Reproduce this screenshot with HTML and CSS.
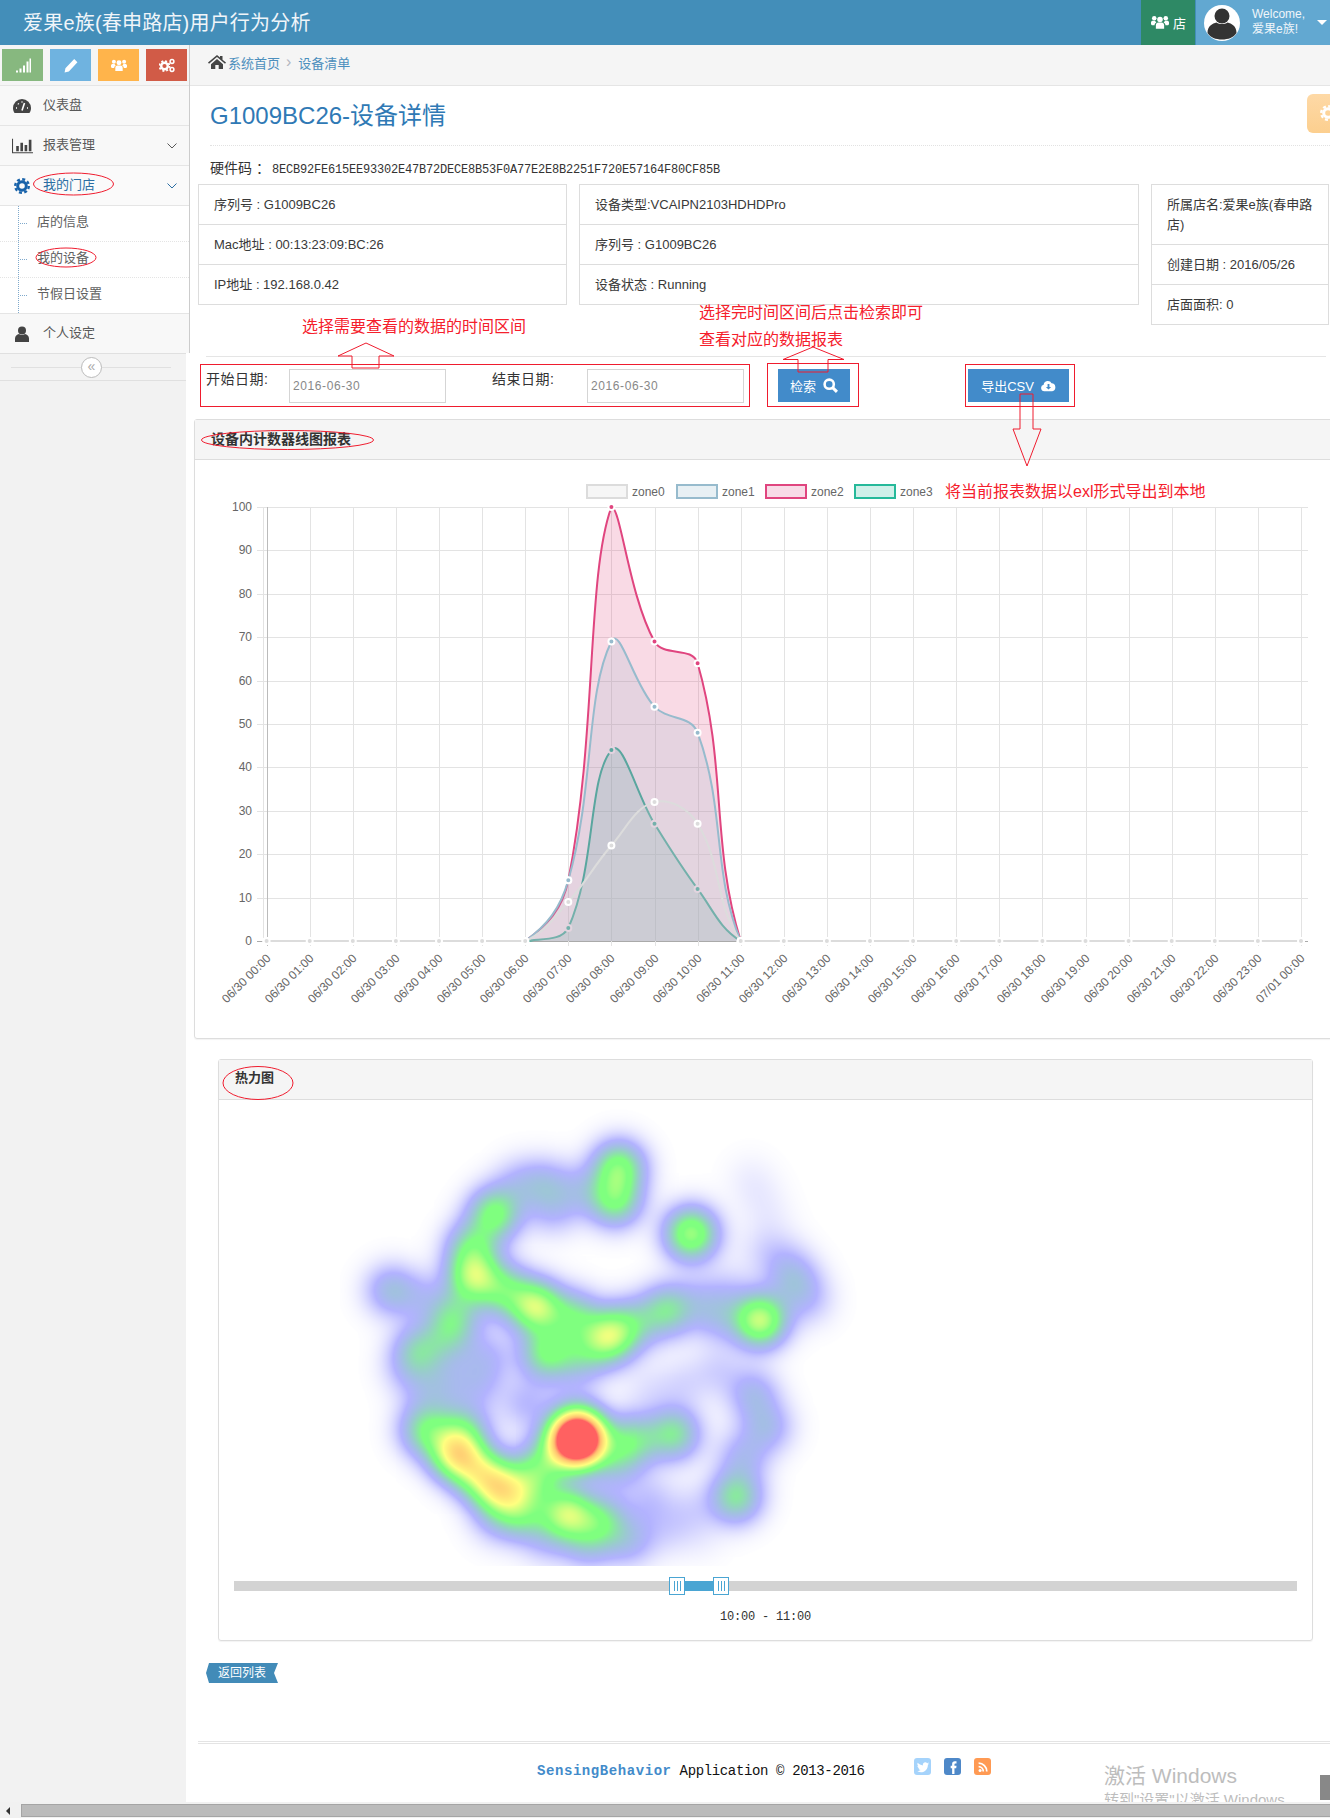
FILE: index.html
```html
<!DOCTYPE html>
<html lang="zh-CN">
<head>
    <meta charset="UTF-8">
    <title>爱果e族(春申路店)用户行为分析</title>
    <link rel="stylesheet" href="styles.css">
</head>
<body>
    <!-- Top bar -->
    <header class="navbar">
        <div class="brand">爱果e族(春申路店)用户行为分析</div>
        <div class="store-tile">
            <svg class="ico-users" viewBox="0 0 20 16"><circle cx="10" cy="4.6" r="3.1"/><circle cx="3.6" cy="3.4" r="2.5"/><circle cx="16.4" cy="3.4" r="2.5"/><path d="M5.4 15V11c0-2 1.5-3 2.4-3h4.4c.9 0 2.4 1 2.4 3v4zM0 10V8c0-1.4 1-2 2-2h2.5c.3 1 1 1.6 1.5 2-1.200.5-2 1.600-2 3H1zM20 10V8c0-1.400-1-2-2-2h-2.500c-.3 1-1 1.600-1.500 2 1.200.5 2 1.600 2 3h3z"/></svg>
            <span>店</span>
        </div>
        <div class="user-tile">
            <svg class="avatar" viewBox="0 0 36 36"><circle cx="18" cy="18" r="18" fill="#fff"/><circle cx="18" cy="11" r="7.500" fill="#333"/><path d="M3.500 28c0-7 5-9.500 9-10.500 3 2 8 2 11 0 4 1 9 3.500 9 10.500-3 4.500-8 6.500-14.500 6.500S6.500 32.500 3.500 28z" fill="#333"/></svg>
            <div class="welcome">Welcome,<br>爱果e族!</div>
            <i class="caret"></i>
        </div>
    </header>

    <div class="layout">
        <!-- Side menu -->
        <aside class="sidebar">
            <div class="sidebar-top">
                <div class="shortcuts">
                    <a class="short green"><svg viewBox="0 0 16 14"><path d="M1 12h2v2H1zM4.500 10h2v4h-2zM8 7h2v7H8zM11.500 3h2v11h-2zM14.500 0H16v14h-1.500z"/></svg></a>
                    <a class="short blue"><svg viewBox="0 0 14 14"><path d="M10 1l3 3-8 8.500L1 13.500 1.800 9.500zM2.500 10l1.500 1.500"/></svg></a>
                    <a class="short orange"><svg viewBox="0 0 20 16"><circle cx="10" cy="4.600" r="3.100"/><circle cx="3.600" cy="3.400" r="2.500"/><circle cx="16.400" cy="3.400" r="2.500"/><path d="M5.400 15V11c0-2 1.500-3 2.400-3h4.400c.9 0 2.400 1 2.400 3v4zM0 10V8c0-1.400 1-2 2-2h2.500c.3 1 1 1.600 1.500 2-1.200.5-2 1.600-2 3H1zM20 10V8c0-1.400-1-2-2-2h-2.500c-.3 1-1 1.600-1.500 2 1.200.5 2 1.600 2 3h3z"/></svg></a>
                    <a class="short red"><svg viewBox="0 0 16 14"><circle cx="5.500" cy="7.500" r="3.300" fill="none" stroke="#fff" stroke-width="2.400"/><circle cx="5.500" cy="7.500" r="5" fill="none" stroke="#fff" stroke-width="1.800" stroke-dasharray="2 1.930"/><circle cx="13" cy="3" r="1.900" fill="none" stroke="#fff" stroke-width="1.500"/><circle cx="13" cy="11" r="1.900" fill="none" stroke="#fff" stroke-width="1.500"/></svg></a>
                </div>
                <nav class="menu">
                    <a class="menu-item">
                        <svg class="menu-ico" viewBox="0 0 18 14"><path fill="#444" d="M9 0a9 9 0 0 1 9 9c0 2-.6 3.700-1.600 5H1.600C.6 12.700 0 11 0 9a9 9 0 0 1 9-9z"/><path stroke="#fff" stroke-width="1.600" d="M9 11.500L11.500 4M3 9h1M14 9h1M5 4.500l.7.7M9 2.500v1"/></svg>
                        <span>仪表盘</span>
                    </a>
                    <a class="menu-item">
                        <svg class="menu-ico wide" viewBox="0 0 20 14"><path fill="none" stroke="#444" d="M.5 0v13.500H20"/><path fill="#444" d="M4 7h2.500v5H4zM8 4h2.500v8H8zM12 6h2.500v6H12zM16 1h2.500v11H16z"/></svg>
                        <span>报表管理</span>
                        <svg class="chev" viewBox="0 0 10 6"><path d="M.5.500L5 5 9.500.5"/></svg>
                    </a>
                    <a class="menu-item active">
                        <svg class="menu-ico" viewBox="0 0 16 16"><circle cx="8" cy="8" r="4.300" fill="none" stroke="#1963aa" stroke-width="3"/><circle cx="8" cy="8" r="6.800" fill="none" stroke="#1963aa" stroke-width="2.400" stroke-dasharray="3 2.340"/></svg>
                        <span>我的门店</span>
                        <svg class="chev" viewBox="0 0 10 6"><path d="M.5.500L5 5 9.500.5"/></svg>
                    </a>
                    <div class="submenu">
                        <a class="sub-item">店的信息</a>
                        <a class="sub-item">我的设备</a>
                        <a class="sub-item">节假日设置</a>
                    </div>
                    <a class="menu-item last">
                        <svg class="menu-ico" viewBox="0 0 16 16"><circle cx="8" cy="4.500" r="4" fill="#444"/><path fill="#444" d="M1 16v-3.500C1 10 3 8.500 5 8c1.800 1.300 4.200 1.300 6 0 2 .5 4 2 4 4.500V16z"/></svg>
                        <span>个人设定</span>
                    </a>
                </nav>
            </div>
            <div class="collapse"><span class="collapse-btn">«</span></div>
            <div class="sidebar-rest"></div>
        </aside>

        <main class="main">
            <div class="breadcrumbs">
                <svg class="ico-home" viewBox="0 0 18 14"><path d="M9 0l3 2.600V1h2.500v3.700L18 7.600l-1 1.100L9 2 1 8.700 0 7.600zM3 9.200L9 4l6 5.200V14h-4.300v-4H7.300v4H3z"/></svg>
                <a>系统首页</a><span class="sep">›</span><a>设备清单</a>
            </div>

            <div class="page-header">
                <h1>G1009BC26-设备详情</h1>
            </div>

            <p class="hardware">硬件码 ：<code>8ECB92FE615EE93302E47B72DECE8B53F0A77E2E8B2251F720E57164F80CF85B</code></p>

            <!-- Device info -->
            <div class="info-row">
                <table class="info-table t1">
                    <tr><td>序列号 : G1009BC26</td></tr>
                    <tr><td>Mac地址 : 00:13:23:09:BC:26</td></tr>
                    <tr><td>IP地址 : 192.168.0.42</td></tr>
                </table>
                <table class="info-table t2">
                    <tr><td>设备类型:VCAIPN2103HDHDPro</td></tr>
                    <tr><td>序列号 : G1009BC26</td></tr>
                    <tr><td>设备状态 : Running</td></tr>
                </table>
                <table class="info-table t3">
                    <tr><td>所属店名:爱果e族(春申路店)</td></tr>
                    <tr><td>创建日期 : 2016/05/26</td></tr>
                    <tr><td>店面面积: 0</td></tr>
                </table>
            </div>

            <hr class="rule">

            <form class="search-row">
                <label>开始日期:</label>
                <input class="date" type="text" value="2016-06-30">
                <label class="second">结束日期:</label>
                <input class="date" type="text" value="2016-06-30">
                <button type="button" class="btn btn-search">检索
                    <svg viewBox="0 0 14 14"><circle cx="5.800" cy="5.800" r="4.300" fill="none" stroke="#fff" stroke-width="2.400"/><path d="M9 9l4 4" stroke="#fff" stroke-width="2.800"/></svg>
                </button>
                <button type="button" class="btn btn-export">导出CSV
                    <svg viewBox="0 0 16 12"><path fill="#fff" d="M3.500 12A3.500 3.500 0 0 1 2.800 5.100 4.500 4.500 0 0 1 11.300 3.700 4.200 4.200 0 0 1 12 12z"/><path fill="#428bca" d="M7 4.500h2v3h1.800L8 10.300 5.200 7.500H7z"/></svg>
                </button>
            </form>

            <!-- Line chart -->
            <section class="panel chart-panel">
                <div class="panel-head">设备内计数器线图报表</div>
                <svg id="chart" class="chart" width="1135" height="578"></svg>
            </section>

            <!-- Heat map -->
            <section class="panel heat-panel">
                <div class="panel-head small">热力图</div>
                <canvas id="heat" class="heat" width="540" height="466"></canvas>
                <div class="slider">
                    <div class="slider-range"></div>
                    <span class="handle h-left"></span>
                    <span class="handle h-right"></span>
                </div>
                <div class="slider-label">10:00 - 11:00</div>
            </section>

            <a class="back-btn">返回列表</a>

            <footer class="footer">
                <p><b>SensingBehavior</b> Application © 2013-2016</p>
                <div class="social">
                    <a class="tw"><svg viewBox="0 0 24 24"><path d="M22.460 6c-.77.350-1.600.580-2.460.690.880-.530 1.560-1.370 1.880-2.380-.830.500-1.750.850-2.720 1.050C18.370 4.500 17.260 4 16 4c-2.350 0-4.270 1.920-4.270 4.290 0 .340.040.670.110.980C8.280 9.090 5.110 7.380 3 4.790c-.370.630-.580 1.370-.580 2.150 0 1.490.750 2.810 1.910 3.560-.710 0-1.370-.200-1.950-.500v.030c0 2.080 1.480 3.820 3.440 4.210a4.220 4.220 0 0 1-1.930.070 4.280 4.280 0 0 0 4 2.980 8.520 8.520 0 0 1-5.330 1.840c-.340 0-.680-.020-1.020-.060C3.440 20.290 5.700 21 8.120 21 16 21 20.330 14.460 20.330 8.790c0-.190 0-.370-.010-.560.840-.600 1.560-1.360 2.140-2.230z"/></svg></a>
                    <a class="fb"><svg viewBox="0 0 24 24"><path d="M18 2v4h-2c-1 0-1.500.5-1.500 1.500V10H18l-.5 4h-3v10h-4V14H8v-4h2.500V6.500C10.500 3.800 12.300 2 15 2z"/></svg></a>
                    <a class="rss"><svg viewBox="0 0 24 24"><circle cx="7" cy="18" r="2.600"/><path d="M4.500 10a9.500 9.500 0 0 1 9.500 9.500h-3A6.500 6.500 0 0 0 4.500 13zM4.500 4A15.500 15.500 0 0 1 20 19.500h-3A12.500 12.500 0 0 0 4.500 7z"/></svg></a>
                </div>
            </footer>
        </main>
    </div>

    <!-- Gear tab and activation notice sit over the page -->
    <div class="settings-tab">
        <svg viewBox="0 0 16 16"><circle cx="8" cy="8" r="4.300" fill="none" stroke="#fff" stroke-width="3"/><circle cx="8" cy="8" r="6.800" fill="none" stroke="#fff" stroke-width="2.400" stroke-dasharray="3 2.340"/></svg>
    </div>
    <div class="activate">
        <div class="activate-big">激活 Windows</div>
        <div class="activate-small">转到"设置"以激活 Windows。</div>
    </div>
    <span class="page-grip"></span>

    <div class="scrollbar"><span class="scroll-left"></span><span class="scroll-thumb"></span></div>

    <!-- Red notes someone drew on the screenshot -->
    <div class="note n1">选择需要查看的数据的时间区间</div>
    <div class="note n2">选择完时间区间后点击检索即可<br>查看对应的数据报表</div>
    <div class="note n3">将当前报表数据以exl形式导出到本地</div>
    <svg class="marks" width="1330" height="1818">
        <ellipse cx="73.500" cy="184" rx="40" ry="11"/>
        <ellipse cx="66" cy="257.500" rx="30" ry="9.500"/>
        <ellipse cx="287.500" cy="440" rx="86" ry="9.500"/>
        <ellipse cx="258" cy="1083" rx="35" ry="16.500"/>
        <rect x="200.500" y="364.500" width="549" height="42"/>
        <rect x="767.500" y="363.500" width="91" height="43"/>
        <rect x="965.500" y="364.500" width="109" height="42"/>
        <polygon points="366,343 394,356 379,356 379,368 352,368 352,356 338,356"/>
        <polygon points="813,347 844,359.500 828,359.500 828,372 798,372 798,359.500 783,359.500"/>
        <polygon points="1020,394 1033,394 1033,429 1041,429 1027,466 1013,429 1020,429"/>
    </svg>

    <script src="script.js"></script>
</body>
</html>
```

FILE: styles.css
```css
/* General Styles */
html, body {
    margin: 0;
    padding: 0;
    height: 100%;
    overflow: hidden;
}

body {
    position: relative;
    font-family: "Liberation Sans", "Noto Sans CJK SC", sans-serif;
    font-size: 13px;
    color: #393939;
    background-color: #fff;
}

/* Top bar */
.navbar {
    display: flex;
    align-items: stretch;
    height: 45px;
    background-color: #438eb9;
    color: #fff;
}

.brand {
    flex: 1;
    padding-left: 23px;
    font-size: 20px;
    letter-spacing: .2px;
    line-height: 47px;
    color: #f0f5f9;
}

.store-tile {
    display: flex;
    align-items: center;
    width: 54px;
    padding-left: 10px;
    box-sizing: border-box;
    background-color: #2e8965;
    font-size: 13px;
}

.ico-users {
    width: 18px;
    height: 15px;
    margin-right: 4px;
    fill: #fff;
}

.user-tile {
    display: flex;
    align-items: center;
    width: 134px;
    margin-left: 1px;
    padding-left: 8px;
    box-sizing: border-box;
    background-color: #62a8d1;
}

.avatar {
    width: 36px;
    height: 36px;
    margin-right: 12px;
}

.welcome {
    width: 65px;
    margin-top: -2px;
    font-size: 12px;
    line-height: 15px;
    color: #f0f6fa;
}

.caret {
    width: 0;
    height: 0;
    border-left: 5px solid transparent;
    border-right: 5px solid transparent;
    border-top: 5px solid #fff;
}

/* Layout */
.layout {
    display: flex;
    height: 1757px;
}

.sidebar {
    display: flex;
    flex-direction: column;
    flex: none;
    width: 190px;
}

.sidebar-top {
    height: 308px;
    box-sizing: border-box;
    border-right: 1px solid #ccc;
    background-color: #f8f8f8;
}

.shortcuts {
    display: flex;
    gap: 7px;
    height: 41px;
    padding: 4px 2px 0;
    box-sizing: border-box;
    background-color: #f5f5f5;
    border-bottom: 1px solid #e5e5e5;
}

.short {
    display: flex;
    align-items: center;
    justify-content: center;
    width: 41px;
    height: 32px;
}

.short svg {
    width: 16px;
    height: 15px;
    fill: #fff;
}

.green { background-color: #87b87f; }
.blue { background-color: #6fb3e0; }
.orange { background-color: #ffb44b; }
.red { background-color: #d15b47; }

.menu-item {
    display: flex;
    align-items: center;
    position: relative;
    height: 40px;
    padding: 0 0 5px 43px;
    box-sizing: border-box;
    border-bottom: 1px solid #e5e5e5;
    font-size: 13px;
    color: #585858;
}

.menu-item.active {
    color: #2b6ea3;
    background-color: #fafafa;
}

.menu-ico {
    position: absolute;
    left: 13px;
    top: 12px;
    width: 18px;
    height: 16px;
}

.menu-ico.wide {
    left: 12px;
    width: 21px;
}

.chev {
    position: absolute;
    left: 167px;
    top: 17px;
    width: 10px;
    height: 6px;
    fill: none;
    stroke: #585858;
}

.active .chev {
    stroke: #2b6ea3;
}

.submenu {
    position: relative;
    background-color: #fff;
    border-bottom: 1px solid #e5e5e5;
}

.submenu::before {
    content: "";
    position: absolute;
    left: 18px;
    top: 0;
    bottom: 0;
    border-left: 1px dotted #7fa9cc;
}

.sub-item {
    display: flex;
    align-items: center;
    position: relative;
    height: 36px;
    padding: 0 0 6px 37px;
    box-sizing: border-box;
    border-bottom: 1px dotted #e4e4e4;
    font-size: 13px;
    color: #616161;
}

.sub-item:last-child {
    border-bottom: 0;
    height: 35px;
}

.sub-item::before {
    content: "";
    position: absolute;
    left: 20px;
    top: 17px;
    width: 7px;
    border-top: 1px dotted #7fa9cc;
}

.menu-item.last {
    border-bottom: 0;
}

.collapse {
    position: relative;
    width: 186px;
    height: 28px;
    box-sizing: border-box;
    background-color: #f3f3f3;
    border-top: 1px solid #e0e0e0;
    border-bottom: 1px solid #e0e0e0;
}

.collapse::before {
    content: "";
    position: absolute;
    left: 11px;
    right: 15px;
    top: 13px;
    border-top: 1px solid #e0e0e0;
}

.collapse-btn {
    position: absolute;
    left: 81px;
    top: 3px;
    width: 19px;
    height: 19px;
    border: 1px solid #bbb;
    border-radius: 50%;
    background-color: #fff;
    font-size: 14px;
    line-height: 16px;
    text-align: center;
    color: #aaa;
}

.sidebar-rest {
    flex: 1;
    width: 186px;
    background-color: #f2f2f2;
}

/* Main column */
.main {
    flex: 1;
    min-width: 0;
    overflow: hidden;
}

.breadcrumbs {
    display: flex;
    align-items: center;
    height: 41px;
    padding: 0 0 6px 18px;
    box-sizing: border-box;
    background-color: #f5f5f5;
    border-bottom: 1px solid #e5e5e5;
    font-size: 13px;
    color: #4c8fbd;
}

.ico-home {
    width: 18px;
    height: 14px;
    margin-right: 2px;
    fill: #444;
}

.sep {
    margin: 0 7px 0 6px;
    font-size: 16px;
    color: #b2b6bf;
}

.page-header {
    height: 60px;
    margin-left: 20px;
    box-sizing: border-box;
    border-bottom: 1px dotted #e2e2e2;
}

.page-header h1 {
    margin: 0;
    font-size: 24px;
    font-weight: normal;
    line-height: 60px;
    color: #2f79b5;
}

.hardware {
    height: 38px;
    margin: 0 0 0 20px;
    box-sizing: border-box;
    font-size: 14px;
    line-height: 44px;
    color: #333;
}

.hardware code {
    margin-left: 2px;
    font-family: "Liberation Mono", monospace;
    font-size: 12px;
    letter-spacing: -.2px;
}

.info-row {
    display: flex;
    align-items: flex-start;
    margin-left: 8px;
    height: 139px;
}

.info-table {
    border-collapse: collapse;
    table-layout: fixed;
    flex: none;
}

.info-table td {
    padding: 9.500px 15px;
    border: 1px solid #ddd;
    line-height: 20px;
}

.t1 { width: 369px; margin-right: 12px; }
.t2 { width: 560px; margin-right: 12px; }
.t3 { width: 178px; }

.rule {
    height: 0;
    margin: 33px 4px 0 16px;
    border: 0;
    border-top: 1px solid #e5e5e5;
}

.search-row {
    display: flex;
    align-items: flex-start;
    height: 50px;
    margin: 12px 0 0 16px;
    font-size: 14px;
}

.search-row label {
    width: 83px;
    letter-spacing: .5px;
    line-height: 20px;
    color: #333;
}

.search-row label.second {
    width: 95px;
    margin-left: 46px;
}

.date {
    width: 157px;
    height: 34px;
    padding: 0 3px;
    box-sizing: border-box;
    border: 1px solid #d5d5d5;
    font-family: "Liberation Sans", sans-serif;
    font-size: 12px;
    letter-spacing: .6px;
    color: #888;
}

.btn {
    display: flex;
    align-items: center;
    justify-content: center;
    height: 33px;
    padding: 0;
    border: 0;
    background-color: #428bca;
    font-family: inherit;
    font-size: 13px;
    color: #fff;
}

.btn svg {
    width: 15px;
    height: 15px;
    margin-left: 7px;
}

.btn-search {
    width: 72px;
    margin-left: 34px;
}

.btn-export {
    width: 101px;
    margin-left: 118px;
}

.panel {
    border: 1px solid #ddd;
    box-sizing: border-box;
    border-radius: 3px;
    box-shadow: 0 1px 1px rgba(0, 0, 0, .05);
}

.panel-head {
    height: 40px;
    padding-left: 16px;
    box-sizing: border-box;
    background-color: #f5f5f5;
    border-bottom: 1px solid #ddd;
    font-size: 14px;
    font-weight: bold;
    line-height: 39px;
    color: #333;
}

.panel-head.small {
    padding-left: 16px;
    font-size: 13px;
    line-height: 36px;
}

.chart-panel {
    width: 1200px;
    height: 620px;
    margin-left: 4px;
}

.chart {
    display: block;
}

.chart text {
    font-family: "Liberation Sans", sans-serif;
    font-size: 12px;
    fill: #666;
}

.heat-panel {
    width: 1095px;
    height: 582px;
    margin: 20px 0 0 28px;
}

.heat {
    display: block;
    margin-left: 121px;
}

.slider {
    position: relative;
    height: 10px;
    margin: 15px 15px 0 15px;
    background-color: #d3d3d3;
}

.slider-range {
    position: absolute;
    left: 443px;
    width: 48px;
    top: 0;
    bottom: 0;
    background-color: #4aa5d3;
}

.handle {
    position: absolute;
    top: -4px;
    width: 14px;
    height: 16px;
    border: 1px solid #4aa5d3;
    background-color: #fff;
}

/* three grip lines */
.handle::after {
    content: "";
    position: absolute;
    left: 4px;
    top: 3px;
    width: 7px;
    height: 10px;
    background: repeating-linear-gradient(90deg, #4aa5d3 0, #4aa5d3 1px, transparent 1px, transparent 3px);
}

.h-left { left: 435px; }
.h-right { left: 479px; }

.slider-label {
    margin-top: 19px;
    font-family: "Liberation Mono", monospace;
    font-size: 12px;
    letter-spacing: -.2px;
    line-height: 14px;
    text-align: center;
    color: #333;
}

.back-btn {
    display: block;
    width: 72px;
    height: 20px;
    margin: 22px 0 0 16px;
    background-color: #428bb8;
    clip-path: polygon(3px 0, 100% 0, calc(100% - 4px) 50%, 100% 100%, 3px 100%, 0 50%);
    font-size: 12px;
    line-height: 20px;
    text-align: center;
    color: #fff;
}

.footer {
    position: relative;
    height: 58px;
    margin: 58px 0 0 8px;
    border-top: 3px double #e4e4e4;
}

.footer p {
    position: absolute;
    left: 339px;
    top: 17px;
    margin: 0;
    font-family: "Liberation Mono", monospace;
    font-size: 14px;
    letter-spacing: -.36px;
    line-height: 20px;
    color: #111;
}

.footer b {
    letter-spacing: .57px;
    color: #428bca;
}

.social {
    position: absolute;
    left: 716px;
    top: 14px;
    display: flex;
    gap: 13px;
}

.social a {
    display: flex;
    align-items: center;
    justify-content: center;
    width: 17px;
    height: 17px;
    border-radius: 3px;
}

.social svg {
    width: 14px;
    height: 14px;
    fill: #fff;
}

.tw { background-color: #a5d3fb; }
.fb { background-color: #4e88c8; }
.rss { background-color: #ff9a53; }

/* Horizontal scroll bar at the bottom of the shot */
.scrollbar {
    position: relative;
    display: flex;
    height: 16px;
    padding-top: 2px;
    box-sizing: border-box;
    background-color: #f1f1f1;
}

.scroll-left {
    width: 21px;
    position: relative;
}

.scroll-left::after {
    content: "";
    position: absolute;
    left: 6px;
    top: 3px;
    border-top: 4px solid transparent;
    border-bottom: 4px solid transparent;
    border-right: 4px solid #333;
}

.scroll-thumb {
    flex: 1;
    height: 13px;
    box-sizing: border-box;
    background-color: #bbb;
    border: 1px solid #a5a5a5;
    border-right: 0;
}

/* Things lying over the page */
.settings-tab {
    position: absolute;
    left: 1307px;
    top: 94px;
    width: 30px;
    height: 39px;
    border-radius: 6px 0 0 6px;
    background: linear-gradient(#fed9a6, #fccf8f);
}

.settings-tab svg {
    position: absolute;
    left: 13px;
    top: 11px;
    width: 16px;
    height: 16px;
}

.activate {
    position: absolute;
    left: 1104px;
    top: 1762px;
    color: #bdbdbd;
}

.activate-big {
    font-size: 21px;
    line-height: 28px;
}

.activate-small {
    font-size: 15px;
    line-height: 20px;
}

.page-grip {
    position: absolute;
    left: 1320px;
    top: 1775px;
    width: 10px;
    height: 25px;
    background-color: #888;
}

.note {
    position: absolute;
    font-family: "Noto Sans CJK SC", sans-serif;
    font-size: 16px;
    color: #f5202c;
    white-space: nowrap;
}

.n1 { left: 302px; top: 315px; line-height: 20px; }
.n2 { left: 699px; top: 298px; line-height: 27px; }
.n3 { left: 945px; top: 482px; line-height: 20px; font-family: "Liberation Sans", "Noto Sans CJK SC", sans-serif; }

.marks {
    position: absolute;
    left: 0;
    top: 0;
    pointer-events: none;
    fill: none;
    stroke: #ef1c2e;
    stroke-width: 1;
}
```

FILE: script.js
```js
// Draws the counter line chart and the heat map

var svgNS = 'http://www.w3.org/2000/svg';
var chart = document.getElementById('chart');

// page position of the chart svg
var originX = 195, originY = 460;
var x0 = 266.6 - originX, dx = 43.1;
var yZero = 941 - originY, yStep = 4.34;

function add(name, attrs, text) {
    var el = document.createElementNS(svgNS, name);
    for (var k in attrs) el.setAttribute(k, attrs[k]);
    if (text !== undefined) el.textContent = text;
    chart.appendChild(el);
    return el;
}

function px(i) { return x0 + i * dx; }
function py(v) { return yZero - v * yStep; }

// grid
for (var v = 0; v <= 100; v += 10) {
    var gy = Math.round(py(v)) + 0.5;
    add('line', { x1: 62, x2: 1113, y1: gy, y2: gy, stroke: v === 0 ? '#aaa' : '#e3e3e3' });
    add('text', { x: 57, y: gy + 3, 'text-anchor': 'end' }, v);
}
add('line', { x1: 68.5, x2: 68.5, y1: py(100), y2: py(0), stroke: '#e3e3e3' });

for (var h = 0; h <= 24; h++) {
    var label = h < 24 ? '06/30 ' + (h < 10 ? '0' + h : h) + ':00' : '07/01 00:00';
    var gx = Math.round(px(h)) + 0.5;
    add('line', { x1: gx, x2: gx, y1: py(100), y2: py(0) + 5, stroke: h === 0 ? '#bbb' : '#e3e3e3' });
    add('text', {
        x: gx + 4, y: py(0) + 18, 'text-anchor': 'end',
        transform: 'rotate(-45 ' + (gx + 4) + ' ' + (py(0) + 18) + ')'
    }, label);
}

// values for 07:00 .. 10:00, every other hour is 0
function series(vals) {
    var out = [];
    for (var i = 0; i <= 24; i++) {
        out.push(i >= 7 && i <= 10 ? vals[i - 7] : 0);
    }
    return out;
}

var datasets = [
    { name: 'zone3', stroke: '#26b99a', fill: 'rgba(38,185,154,.2)', data: series([3, 44, 27, 12]) },
    { name: 'zone2', stroke: '#e0457f', fill: 'rgba(224,69,127,.2)', data: series([14, 100, 69, 64]) },
    { name: 'zone1', stroke: '#97bbcd', fill: 'rgba(151,187,205,.2)', data: series([14, 69, 54, 48]) },
    { name: 'zone0', stroke: '#dcdcdc', fill: 'rgba(220,220,220,.2)', data: series([9, 22, 32, 27]) }
];

// same curve the Chart.js line type uses (tension .4)
function linePath(data) {
    var pts = data.map(function (v, i) { return { x: px(i), y: py(v) }; });
    var ctrl = pts.map(function (p, i) {
        var a = pts[i - 1] || p, b = pts[i + 1] || p;
        var d1 = Math.hypot(p.x - a.x, p.y - a.y), d2 = Math.hypot(b.x - p.x, b.y - p.y);
        var fa = 0.4 * d1 / (d1 + d2), fb = 0.4 * d2 / (d1 + d2);
        var top = py(100), bottom = py(0);
        function cap(y) { return Math.min(bottom, Math.max(top, y)); }
        return {
            inX: p.x - fa * (b.x - a.x), inY: cap(p.y - fa * (b.y - a.y)),
            outX: p.x + fb * (b.x - a.x), outY: cap(p.y + fb * (b.y - a.y))
        };
    });
    var d = 'M' + pts[0].x + ' ' + pts[0].y;
    for (var i = 1; i < pts.length; i++) {
        d += 'C' + ctrl[i - 1].outX + ' ' + ctrl[i - 1].outY + ' ' + ctrl[i].inX + ' ' + ctrl[i].inY + ' ' + pts[i].x + ' ' + pts[i].y;
    }
    return d;
}

// each zone paints over the one before, dots included
datasets.forEach(function (ds) {
    var d = linePath(ds.data);
    add('path', { d: d + 'L' + px(24) + ' ' + py(0) + 'L' + px(0) + ' ' + py(0) + 'Z', fill: ds.fill });
    add('path', { d: d, fill: 'none', stroke: ds.stroke, 'stroke-width': 2 });
    ds.data.forEach(function (v, i) {
        add('circle', { cx: px(i), cy: py(v), r: 3, fill: ds.stroke, stroke: '#fff', 'stroke-width': 2 });
    });
});

// legend
var legend = [
    { x: 391, name: 'zone0', stroke: '#dcdcdc', fill: '#f6f6f6' },
    { x: 481, name: 'zone1', stroke: '#97bbcd', fill: '#e8f0f4' },
    { x: 570, name: 'zone2', stroke: '#e0457f', fill: '#f8dbe7' },
    { x: 659, name: 'zone3', stroke: '#26b99a', fill: '#d0f0e9' }
];
legend.forEach(function (it) {
    add('rect', { x: it.x + 1, y: 25, width: 40, height: 13, fill: it.fill, stroke: it.stroke, 'stroke-width': 2 });
    add('text', { x: it.x + 46, y: 36 }, it.name);
});

// heat map: add up soft dots, then colour by strength
// [x, y, weight], x and y measured on a 2.9x / 3x enlargement of the map
var blobs = [
    [810,170,.38],[800,270,.34],[700,240,.1],[600,220,.13],[520,220,.1],[620,300,.1],
    [450,310,.36],[385,410,.27],[390,500,.45],[480,540,.28],[570,590,.5],[680,620,.27],[780,680,.48],[600,730,.33],
    [700,740,.18],[850,640,.2],[950,600,.28],[1040,570,.08],[1020,370,.46],[1220,630,.52],[1320,510,.14],
    [1360,570,.08],[1100,620,.12],[1130,540,.06],[150,540,.18],[240,560,.08],[330,620,.24],[230,720,.22],[320,690,.14],
    [200,780,.08],[300,820,.1],[400,820,.1],[250,860,.06],[430,740,.1],[540,880,.1],[680,860,.04],
    [690,985,1.7],[850,990,.28],[970,970,.3],[800,1060,.16],[600,1050,.2],[340,1030,.6],[410,1090,.4],[470,1140,.5],
    [250,960,.3],[360,950,.2],[560,1110,.26],[660,1210,.48],[760,1230,.26],[530,1210,.26],[840,1290,.14],[720,1300,.14],
    [600,1290,.08],[450,1230,.08],[1150,1160,.3],[1200,850,.15],[1240,950,.15],[1170,1040,.13],[1020,1200,.05],
    [900,1170,.08],[950,1260,.05],[1190,200,.02],[1250,330,.02],[1220,260,.02],[1230,420,.04],[1000,820,.05],
    [1100,780,.06],[900,840,.04],[1290,450,.06],[1050,1280,.02]
];

var canvas = document.getElementById('heat');
var ctx = canvas.getContext('2d');
var sigma = 18, reach = 60;
var w = canvas.width, h2 = canvas.height;
var field = new Float32Array(w * h2);

blobs.forEach(function (b) {
    var bx = b[0] / 2.9 - 1, by = b[1] / 3 + 10;
    for (var y = Math.max(0, Math.floor(by - reach)); y < Math.min(h2, by + reach); y++) {
        for (var x = Math.max(0, Math.floor(bx - reach)); x < Math.min(w, bx + reach); x++) {
            var d2 = (x - bx) * (x - bx) + (y - by) * (y - by);
            field[y * w + x] += b[2] * Math.exp(-d2 / (2 * sigma * sigma));
        }
    }
});

// strength -> [r, g, b, alpha]
var stops = [
    [0, 0, 0, 255, 0],
    [.12, 0, 0, 255, .3],
    [.36, 0, 255, 0, .5],
    [.42, 0, 255, 0, .5],
    [.62, 255, 255, 0, .5],
    [.85, 255, 140, 0, .56],
    [1, 255, 0, 0, .62]
];

function shade(val) {
    val = Math.min(val, 1);
    for (var i = 1; i < stops.length; i++) {
        if (val <= stops[i][0]) {
            var a = stops[i - 1], b = stops[i], t = (val - a[0]) / (b[0] - a[0]);
            return [1, 2, 3, 4].map(function (n) { return a[n] + (b[n] - a[n]) * t; });
        }
    }
    return stops[stops.length - 1].slice(1);
}

var img = ctx.createImageData(w, h2);
for (var n = 0; n < field.length; n++) {
    if (field[n] < 0.002) continue;
    var c = shade(field[n]);
    img.data[n * 4] = c[0];
    img.data[n * 4 + 1] = c[1];
    img.data[n * 4 + 2] = c[2];
    img.data[n * 4 + 3] = c[3] * 255;
}
ctx.putImageData(img, 0, 0);
```
